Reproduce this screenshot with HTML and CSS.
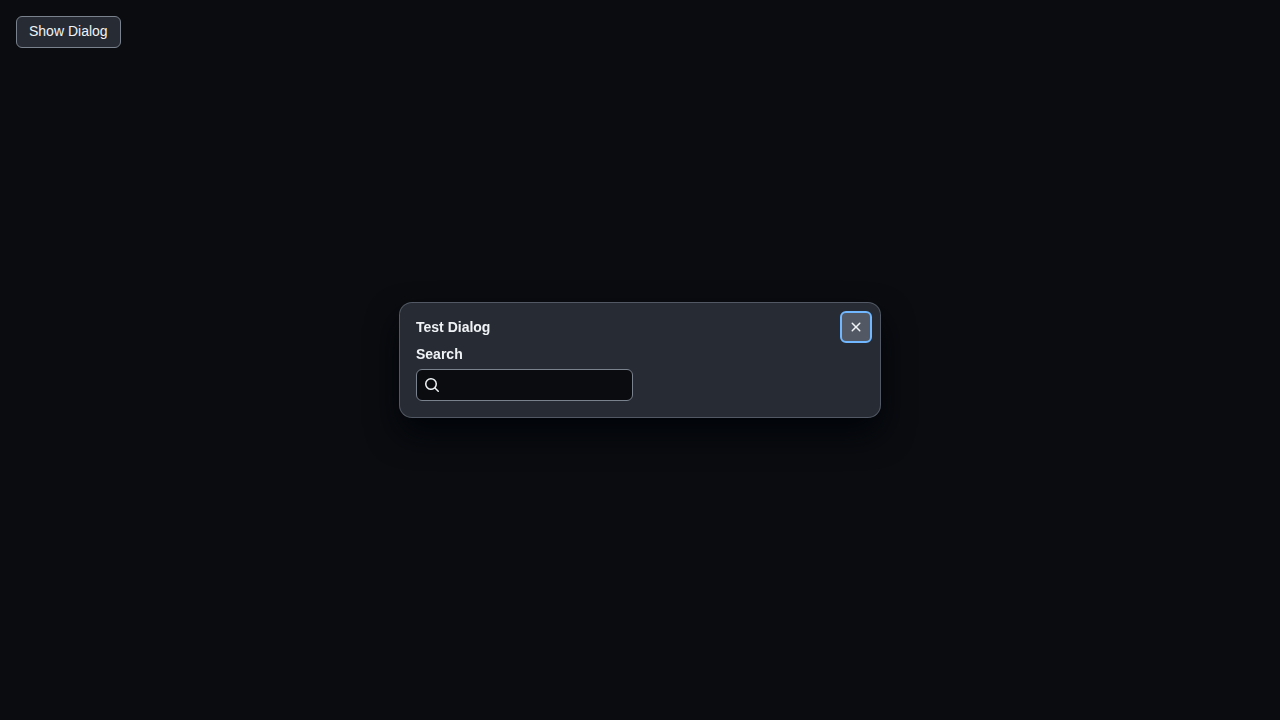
FILE: index.html
```html
<!DOCTYPE html>
<html lang="en">
<head>
<meta charset="utf-8">
<meta name="viewport" content="width=device-width, initial-scale=1">
<title>Test Dialog</title>
<link rel="stylesheet" href="styles.css">
</head>
<body>
<main class="page">
  <button class="button" type="button">Show Dialog</button>
</main>
<div class="overlay">
  <section class="dialog" role="dialog" aria-modal="true" aria-labelledby="dialog-title">
    <header class="dialog-header">
      <h1 class="dialog-title" id="dialog-title">Test Dialog</h1>
      <button class="close-button" type="button" aria-label="Close">
        <svg class="icon" viewBox="0 0 16 16" width="16" height="16" aria-hidden="true"><path d="M3.72 3.72a.75.75 0 0 1 1.06 0L8 6.94l3.22-3.22a.749.749 0 0 1 1.275.326.749.749 0 0 1-.215.734L9.06 8l3.22 3.22a.749.749 0 0 1-.326 1.275.749.749 0 0 1-.734-.215L8 9.06l-3.22 3.22a.751.751 0 0 1-1.042-.018.751.751 0 0 1-.018-1.042L6.94 8 3.72 4.78a.75.75 0 0 1 0-1.06Z"/></svg>
      </button>
    </header>
    <div class="dialog-body">
      <label class="field-label" for="search">Search</label>
      <div class="search-field">
        <svg class="icon" viewBox="0 0 16 16" width="16" height="16" aria-hidden="true"><path d="M10.68 11.74a6 6 0 0 1-7.922-8.982 6 6 0 0 1 8.982 7.922l3.04 3.04a.749.749 0 0 1-.326 1.275.749.749 0 0 1-.734-.215ZM11.5 7a4.499 4.499 0 1 0-8.997 0A4.499 4.499 0 0 0 11.5 7Z"/></svg>
        <input class="search-input" id="search" type="text">
      </div>
    </div>
  </section>
</div>
</body>
</html>
```
FILE: styles.css
```css
* {
  box-sizing: border-box;
}

body {
  margin: 0;
  background: #0a0c10;
  color: #f0f3f6;
  font: 14px/21px "Liberation Sans", Arial, sans-serif;
}

.page {
  padding: 16px;
}

.button {
  display: flex;
  align-items: center;
  height: 32px;
  padding: 0 12px 2px;
  border: 1px solid #7a828e;
  border-radius: 6px;
  background: #272b33;
  color: inherit;
  font: inherit;
}

.overlay {
  position: fixed;
  inset: 0;
  display: flex;
  align-items: center;
  justify-content: center;
  padding: 16px;
}

.dialog {
  width: 100%;
  max-width: 480px;
  border-radius: 12px;
  background: #272b33;
  box-shadow: 0 0 0 1px #525964, 0 16px 32px #010409;
}

.dialog-header {
  display: flex;
  align-items: center;
  justify-content: space-between;
  padding: 8px 8px 0 16px;
}

.dialog-title {
  margin: 0;
  font-size: 14px;
  font-weight: 700;
}

.close-button {
  display: grid;
  place-items: center;
  width: 32px;
  height: 32px;
  padding: 0;
  border: 2px solid #71b7ff;
  border-radius: 6px;
  background: #525964;
  color: #f0f3f6;
}

.icon {
  flex: none;
  fill: currentColor;
}

.dialog-body {
  display: flex;
  flex-direction: column;
  align-items: flex-start;
  gap: 4px;
  padding: 1px 16px 16px;
}

.field-label {
  font-weight: 700;
}

.search-field {
  display: flex;
  align-items: center;
  gap: 8px;
  height: 32px;
  max-width: 100%;
  padding: 0 8px 0 7px;
  border: 1px solid #7a828e;
  border-radius: 6px;
  background: #0a0c10;
}

.search-input {
  width: 176px;
  min-width: 0;
  padding: 0;
  border: 0;
  outline: 0;
  background: transparent;
  color: inherit;
  font: inherit;
}
```
